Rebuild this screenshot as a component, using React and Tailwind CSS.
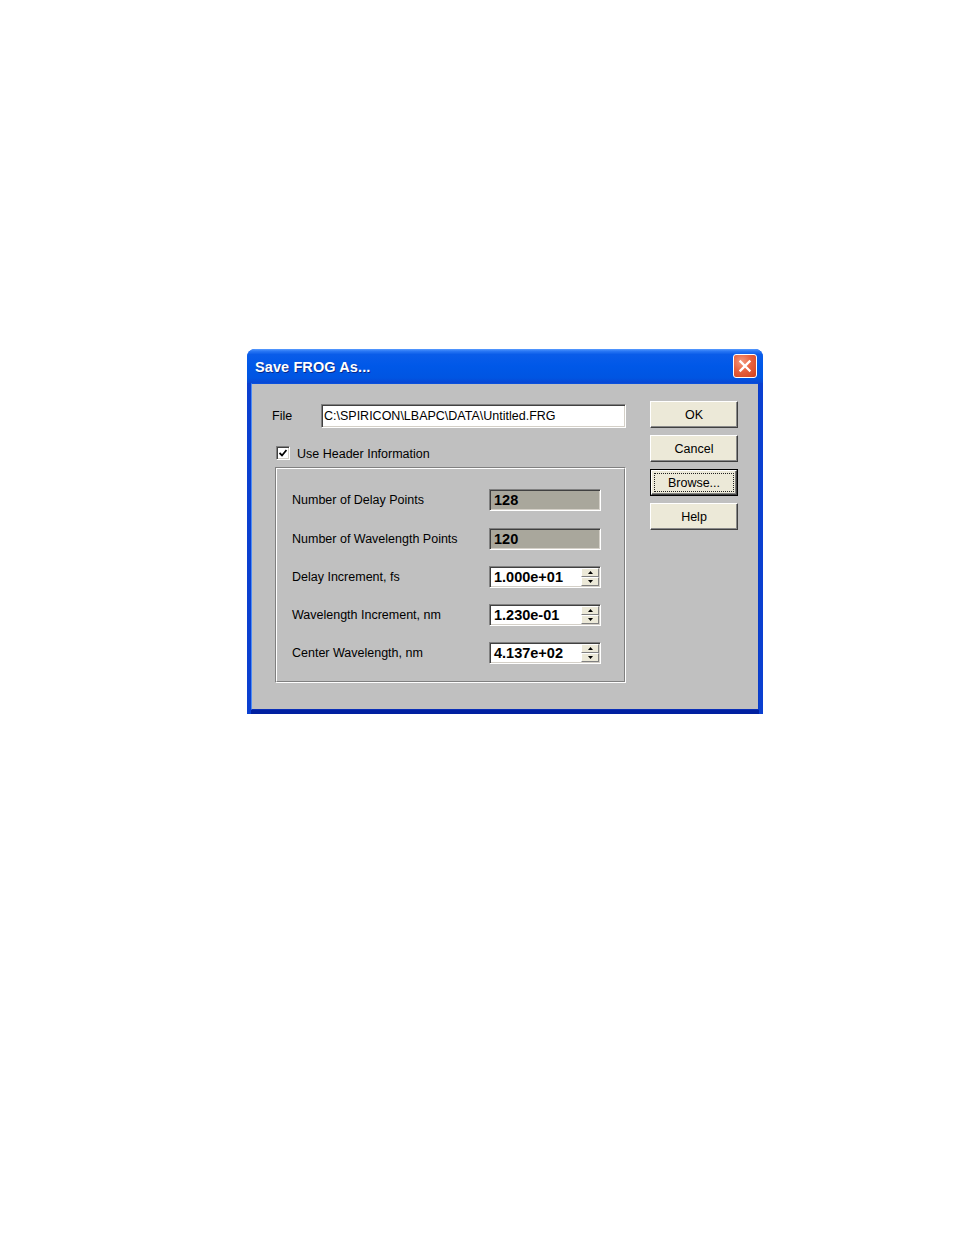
import React from "react";

function Sunken({ className = "", children }) {
  return (
    <div
      className={
        "border border-t-[#808080] border-l-[#808080] border-b-white border-r-white shadow-[inset_1px_1px_0_#404040,inset_-1px_-1px_0_#d4d0c8] " +
        className
      }
    >
      {children}
    </div>
  );
}

function Btn({ label, focused }) {
  if (focused) {
    return (
      <div className="w-[88px] h-[27px] border border-black bg-[#ece9d8] flex">
        <div className="flex-1 flex border border-t-white border-l-white border-b-[#404040] border-r-[#404040] shadow-[inset_-1px_-1px_0_#808080]">
          <div className="flex-1 m-[2px] border border-dotted border-[#202020] flex items-center justify-center text-[12.5px] leading-none text-black pt-[1px]">
            {label}
          </div>
        </div>
      </div>
    );
  }
  return (
    <div className="w-[88px] h-[27px] bg-[#ece9d8] border border-t-white border-l-white border-b-[#404040] border-r-[#404040] shadow-[inset_-1px_-1px_0_#8a8a8a] flex items-center justify-center text-[12.5px] leading-none text-black pt-[1px]">
      {label}
    </div>
  );
}

function DisabledField({ value }) {
  return (
    <Sunken className="w-[112px] h-[22px] bg-[#a9a79c] flex items-center pl-[4px] pt-[1px]">
      <span className="text-[14.5px] font-bold leading-none text-black">{value}</span>
    </Sunken>
  );
}

function SpinField({ value }) {
  return (
    <Sunken className="w-[112px] h-[22px] bg-white flex items-stretch p-[1px]">
      <div className="flex-1 flex items-center pl-[3px] pt-[1px]">
        <span className="text-[14.5px] font-bold leading-none text-black">{value}</span>
      </div>
      <div className="w-[18px] flex flex-col">
        <div className="flex-1 bg-[#ece9d8] border border-t-white border-l-white border-b-[#808080] border-r-[#808080] flex items-center justify-center">
          <svg width="5" height="3" viewBox="0 0 5 3">
            <path d="M2.5 0 L5 3 L0 3 Z" fill="#000" />
          </svg>
        </div>
        <div className="flex-1 bg-[#ece9d8] border border-t-white border-l-white border-b-[#808080] border-r-[#808080] flex items-center justify-center">
          <svg width="5" height="3" viewBox="0 0 5 3">
            <path d="M0 0 L5 0 L2.5 3 Z" fill="#000" />
          </svg>
        </div>
      </div>
    </Sunken>
  );
}

function Row({ label, children, extra = "" }) {
  return (
    <div className={"flex items-center h-[22px] " + extra}>
      <div className="w-[197px] text-[12.5px] leading-none text-black pt-[1px]">{label}</div>
      {children}
    </div>
  );
}

export default function App() {
  return (
    <div className="min-h-[1235px] w-full bg-white pt-[349px] pl-[247px] font-['Liberation_Sans',Arial,sans-serif]">
      <div className="w-[516px] h-[365px] flex flex-col rounded-t-[8px] overflow-hidden bg-[#0854e4]">
        {/* Title bar */}
        <div className="h-[34px] flex items-center justify-between pl-[8px] pr-[6px] bg-[linear-gradient(to_bottom,#5a9cff_0%,#2a78f5_6%,#0a5ce9_16%,#0058e8_50%,#0055e2_85%,#0847d4_100%)]">
          <span className="pt-[3px] text-white font-bold text-[14.5px] leading-none [text-shadow:1px_1px_0_#0a2a8a] tracking-[0.1px]">
            Save FROG As...
          </span>
          <div className="w-[24px] h-[24px] rounded-[3px] border border-white bg-[radial-gradient(circle_at_35%_30%,#f39a7f_0%,#e8623f_45%,#d0401c_100%)] flex items-center justify-center">
            <svg width="14" height="14" viewBox="0 0 14 14">
              <path d="M2.5 2.5 L11.5 11.5 M11.5 2.5 L2.5 11.5" stroke="#fff" strokeWidth="2.4" strokeLinecap="square" />
            </svg>
          </div>
        </div>
        {/* Frame + client */}
        <div className="flex-1 flex px-[4px] pb-[4px] bg-[linear-gradient(to_right,#0a3fd0_0%,#0b5ae8_40%,#0b5ae8_60%,#0a3fd0_100%)]">
          <div className="flex-1 flex border border-t-[#0a50dc] border-l-[#4d8df5] border-r-[#0a3cc8] border-b-[#0a2fb8] shadow-[0_4px_0_#0020a0]">
            <div className="flex-1 bg-[#c0c0c0] flex pl-[20px] pt-[17px]">
              {/* left column */}
              <div className="w-[354px] flex flex-col">
                <div className="mt-[3px] h-[24px] flex items-center">
                  <div className="w-[49px] text-[12.5px] leading-none text-black">File</div>
                  <Sunken className="w-[305px] h-[24px] bg-white flex items-center pl-[2px] pt-[1px]">
                    <span className="text-[12.5px] leading-none text-black">C:\SPIRICON\LBAPC\DATA\Untitled.FRG</span>
                  </Sunken>
                </div>
                <div className="mt-[18px] h-[14px] flex items-center pl-[4px]">
                  <Sunken className="w-[14px] h-[14px] bg-white flex items-center justify-center">
                    <svg width="8" height="8" viewBox="0 0 8 8">
                      <path d="M0.5 4 L3 6.5 L7.5 1" stroke="#000" strokeWidth="1.8" fill="none" />
                    </svg>
                  </Sunken>
                  <span className="ml-[7px] pt-[2px] text-[12.5px] leading-none text-black">Use Header Information</span>
                </div>
                <div className="mt-[7px] ml-[3px] w-[351px] h-[216px] border border-t-[#808080] border-l-[#808080] border-b-white border-r-white flex">
                  <div className="flex-1 border border-t-white border-l-white border-b-[#808080] border-r-[#808080] flex flex-col gap-[16px] pt-[20px] pl-[15px]">
                    <Row label="Number of Delay Points" extra="mb-[1px]">
                      <DisabledField value="128" />
                    </Row>
                    <Row label="Number of Wavelength Points">
                      <DisabledField value="120" />
                    </Row>
                    <Row label="Delay Increment, fs">
                      <SpinField value="1.000e+01" />
                    </Row>
                    <Row label="Wavelength Increment, nm">
                      <SpinField value="1.230e-01" />
                    </Row>
                    <Row label="Center Wavelength, nm">
                      <SpinField value="4.137e+02" />
                    </Row>
                  </div>
                </div>
              </div>
              {/* right column */}
              <div className="ml-[24px] flex flex-col gap-[7px]">
                <Btn label="OK" />
                <Btn label="Cancel" />
                <Btn label="Browse..." focused />
                <Btn label="Help" />
              </div>
            </div>
          </div>
        </div>
      </div>
    </div>
  );
}
